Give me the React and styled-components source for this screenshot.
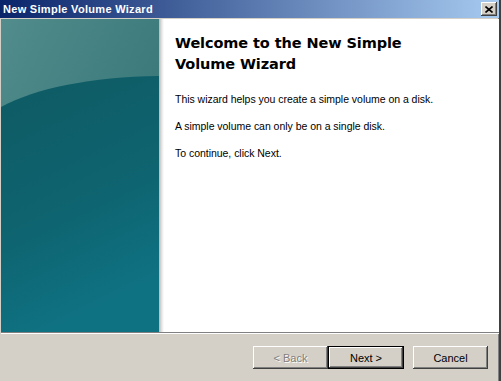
import React from "react";
import styled, { createGlobalStyle } from "styled-components";

const Global = createGlobalStyle`
  html, body { margin: 0; padding: 0; background: #d4d0c8; }
  body { width: 501px; height: 381px; overflow: hidden; }
`;

const Window = styled.div`
  box-sizing: border-box;
  width: 501px;
  height: 381px;
  background: #d4d0c8;
  border-left: 1px solid #d4d0c8;
  border-right: 2px solid #404040;
  box-shadow: inset -1px 0 0 #808080;
  display: flex;
  flex-direction: column;
  font-family: "Liberation Sans", Arial, sans-serif;
`;

const TitleBar = styled.div`
  height: 18px;
  margin-left: -1px;
  background: linear-gradient(to right, #0a246a 0%, #a6caf0 100%);
  display: flex;
  align-items: center;
  justify-content: space-between;
  padding: 0 2px 0 3px;
  flex-shrink: 0;
`;

const Title = styled.span`
  color: #ffffff;
  font-weight: bold;
  font-size: 11px;
  letter-spacing: 0.3px;
  line-height: 18px;
  white-space: nowrap;
`;

const CloseButton = styled.div`
  box-sizing: border-box;
  width: 16px;
  height: 14px;
  background: #d4d0c8;
  box-shadow: inset -1px -1px 0 #404040, inset 1px 1px 0 #ffffff, inset -2px -2px 0 #808080;
  display: flex;
  align-items: center;
  justify-content: center;
`;

const Body = styled.div`
  display: flex;
  height: 313px;
  margin-top: 1px;
  flex-shrink: 0;
  background: #ffffff;
`;

const SidePanel = styled.div`
  width: 158px;
  height: 313px;
  flex-shrink: 0;
  line-height: 0;
`;

const Shade = styled.div`
  width: 5px;
  flex-shrink: 0;
  background: linear-gradient(to right, #b8b8b8, #e8e8e8 60%, #ffffff);
`;

const Content = styled.div`
  flex: 1;
  padding: 14px 10px 0 11px;
  color: #000;
`;

const Heading = styled.h1`
  margin: 0 0 18px 0;
  font-family: "DejaVu Sans", Verdana, sans-serif;
  font-weight: bold;
  font-size: 14.5px;
  line-height: 21px;
  letter-spacing: -0.1px;
`;

const Para = styled.p`
  margin: 0 0 14px 0;
  font-size: 10.5px;
  line-height: 13px;
  letter-spacing: -0.03px;
`;

const Divider = styled.div`
  height: 2px;
  flex-shrink: 0;
  border-top: 1px solid #808080;
  border-bottom: 1px solid #ffffff;
  box-sizing: border-box;
`;

const ButtonBar = styled.div`
  display: flex;
  justify-content: flex-end;
  align-items: flex-start;
  padding: 12px 11px 0 0;
`;

const Button = styled.div`
  box-sizing: border-box;
  width: ${(p) => (p.$default ? 76 : 75)}px;
  height: 23px;
  margin-left: ${(p) => p.$gap || 0}px;
  background: #d4d0c8;
  display: flex;
  align-items: center;
  justify-content: center;
  font-size: 11px;
  color: ${(p) => (p.$disabled ? "#808080" : "#000")};
  text-shadow: ${(p) => (p.$disabled ? "1px 1px 0 #ffffff" : "none")};
  border: ${(p) => (p.$default ? "1px solid #000" : "none")};
  box-shadow: inset -1px -1px 0 #404040, inset 1px 1px 0 #ffffff,
    inset -2px -2px 0 #808080;
`;

const Panel = () => (
  <svg width="158" height="313" viewBox="0 0 158 313">
    <defs>
      <linearGradient id="top" x1="0" y1="0" x2="1" y2="1">
        <stop offset="0" stopColor="#528c8c" />
        <stop offset="1" stopColor="#2c6d70" />
      </linearGradient>
      <linearGradient id="low" x1="0" y1="0" x2="0.3" y2="1">
        <stop offset="0" stopColor="#0e5a63" />
        <stop offset="0.6" stopColor="#0e6470" />
        <stop offset="1" stopColor="#0f7282" />
      </linearGradient>
    </defs>
    <rect x="0" y="0" width="158" height="313" fill="url(#top)" />
    <path d="M0,88 C35,69 90,58 158,57 L158,313 L0,313 Z" fill="url(#low)" />
  </svg>
);

const XIcon = () => (
  <svg width="8" height="7" viewBox="0 0 8 7">
    <path d="M0.5,0.5 L7.5,6.5 M7.5,0.5 L0.5,6.5" stroke="#000" strokeWidth="1.6" />
  </svg>
);

export default function App() {
  return (
    <>
      <Global />
      <Window>
        <TitleBar>
          <Title>New Simple Volume Wizard</Title>
          <CloseButton>
            <XIcon />
          </CloseButton>
        </TitleBar>
        <Body>
          <SidePanel>
            <Panel />
          </SidePanel>
          <Shade />
          <Content>
            <Heading>
              Welcome to the New Simple
              <br />
              Volume Wizard
            </Heading>
            <Para>This wizard helps you create a simple volume on a disk.</Para>
            <Para>A simple volume can only be on a single disk.</Para>
            <Para>To continue, click Next.</Para>
          </Content>
        </Body>
        <Divider />
        <ButtonBar>
          <Button $disabled>&lt; Back</Button>
          <Button $default>Next &gt;</Button>
          <Button $gap={9}>Cancel</Button>
        </ButtonBar>
      </Window>
    </>
  );
}
